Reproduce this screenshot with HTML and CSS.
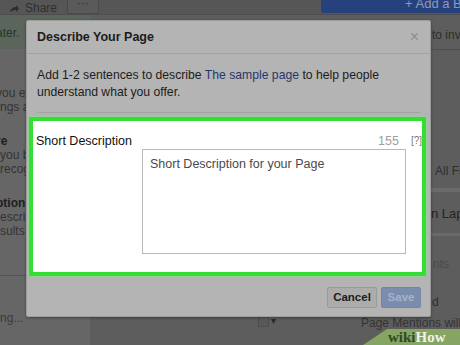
FILE: index.html
```html
<!DOCTYPE html>
<html>
<head>
<meta charset="utf-8">
<link rel="stylesheet" href="styles.css">
</head>
<body>
<div class="page">
  <div class="topbar">
    <div class="tb-left">
      <span class="share"><svg width="10" height="9" viewBox="0 0 10 9"><path d="M1 8 C2 4 5 3 7 3 V1 L10 4.5 L7 8 V6 C5 6 3 6.5 1 8 Z" fill="#2e2e2e"/></svg> Share</span>
      <span class="more">···</span>
    </div>
    <div class="addbtn">+ Add a Button</div>
  </div>
  <div class="cols">
    <div class="left">
      <div class="band">ater.</div>
      <p class="l1">you expect<br>ngs at</p>
      <p class="l2"><b>re</b><br>you b<br>recog</p>
      <p class="l3"><b>ption</b><br>escrip<br>sults</p>
      <div class="lline"></div>
      <p class="l4">ng...</p>
    </div>
    <div class="mid">
      <div class="tools"><span class="sq"></span><span class="caret">▾</span></div>
      <div class="mentions">Page Mentions will show</div>
    </div>
    <div class="right">
      <div class="r1">to invite</div>
      <div class="r2">All Friends</div>
      <div class="r3">n Laptop</div>
      <div class="r4">nts</div>
      <div class="r5">d</div>
    </div>
  </div>

  <div class="modal">
    <div class="m-head">
      <span class="m-title">Describe Your Page</span>
      <span class="m-close">×</span>
    </div>
    <div class="m-intro">Add 1-2 sentences to describe <span class="link">The sample page</span> to help people understand what you offer.</div>
    <div class="hl">
      <div class="lbl">Short Description</div>
      <div class="field">
        <div class="counter"><span class="num">155</span><span class="help">[?]</span></div>
        <div class="ta">Short Description for your Page</div>
      </div>
    </div>
    <div class="m-foot">
      <span class="btn cancel">Cancel</span>
      <span class="btn save">Save</span>
    </div>
  </div>

  <div class="wm"><span class="wiki">wiki</span><span class="how">How</span></div>
</div>
</body>
</html>
```
FILE: styles.css
```css
html, body { margin: 0; padding: 0; }
body {
  width: 460px; height: 345px; overflow: hidden;
  background: #5d5d5d;
  font-family: "Liberation Sans", Arial, sans-serif;
  position: relative;
}
.page { width: 460px; height: 345px; position: relative; overflow: hidden; }
.topbar {
  height: 14px; display: flex; justify-content: space-between;
  background: #565656; border-bottom: 1px solid #4e4e4e;
}
.tb-left { display: flex; align-items: flex-end; }
.share {
  margin-left: 9px; font-size: 12px; color: #2f2f2f; line-height: 12px;
  display: flex; align-items: center; gap: 6px; margin-top: -4px;
}
.more {
  margin-left: 10px; width: 32px; height: 14px; border: 1px solid #4a4a4a; border-top: 0;
  box-sizing: border-box; text-align: center; color: #333; font-size: 12px; line-height: 6px;
  background: #5a5a5a;
}
.addbtn {
  width: 139px; height: 13px; background: #27417d; border-radius: 0 0 0 3px;
  color: #8c9ab8; font-size: 13px; line-height: 8px; padding-left: 84px; box-sizing: border-box;
  white-space: nowrap; overflow: hidden;
}
.cols { display: flex; height: 330px; }
.left { width: 90px; font-size: 12px; color: #2e2e2e; background: #666; flex: none; }
.left p { margin: 0; line-height: 14px; }
.band { height: 34px; background: #5b655b; color: #263826; line-height: 36px; text-indent: -4px; }
.l1, .l2, .l3 { text-indent: -4px; color: #333; }
.l1 { padding-top: 37px; }
.l2 { padding-top: 20px; }
.l2 b, .l3 b { color: #1e1e1e; }
.l3 { padding-top: 20px; }
.lline { margin-top: 37px; height: 1px; background: #555; }
.l4 { padding-top: 35px; color: #3a3a3a; }
.mid { flex: 1; min-width: 0; display: flex; flex-direction: column; justify-content: flex-end; padding-bottom: 16px; }
.tools { display: flex; align-items: center; gap: 2px; margin-left: 168px; margin-bottom: -1px; height: 10px; }
.sq { width: 9px; height: 9px; background: #595959; border: 1px solid #4d4d4d; }
.caret { font-size: 10px; color: #2a2a2a; line-height: 10px; }
.mentions { margin-left: 271px; margin-right: -200px; font-size: 12px; color: #333; white-space: nowrap; line-height: 12px; margin-top: -8px; }
.right { width: 40px; font-size: 12px; color: #2e2e2e; white-space: nowrap; overflow: hidden; flex: none; }
.r1 { margin-top: 13px; padding-bottom: 7px; border-bottom: 1px solid #4e4e4e; padding-left: 12px; }
.r2 { margin-top: 114px; padding-left: 15px; padding-bottom: 10px; border-bottom: 4px solid #6b6b6b; }
.r3 { margin-top: 14px; font-size: 13px; color: #232323; padding-left: 11px; padding-bottom: 12px; border-bottom: 3px solid #696969; }
.r4 { margin-top: 21px; color: #4a4a4a; padding-left: 13px; }
.r5 { margin-top: 24px; padding-left: 12px; }

.modal {
  position: absolute; left: 26px; top: 20px; width: 405px; height: 297px;
  background: #b4b4b4; box-sizing: border-box;
  border: 1px solid #9c9c9c; border-radius: 2px;
  box-shadow: 0 1px 3px rgba(0,0,0,0.35);
  display: flex; flex-direction: column;
}
.m-head {
  height: 32px; border-bottom: 1px solid #a3a3a3; display: flex;
  justify-content: space-between; align-items: center; padding: 0 10px 0 10px;
}
.m-title { font-weight: bold; font-size: 12.5px; color: #1c1c1c; }
.m-close { font-size: 16px; color: #8f8f8f; margin-right: 1px; }
.m-intro {
  margin: 13px 10px 0 10px; padding-bottom: 11px; border-bottom: 1px solid #a3a3a3;
  font-size: 12.2px; line-height: 17px; color: #1c1c1c;
}
.link { color: #26366e; }
.hl {
  margin: 4px 4px 0 2px; border: 4px solid #34de34; background: #fff;
  display: grid; grid-template-columns: 106px 280px; padding: 12px 0 18px 3px;
  box-shadow: 0 0 2px #6f6;
}
.lbl { font-size: 12.5px; line-height: 16px; color: #111; }
.counter { display: flex; justify-content: flex-end; gap: 12px; line-height: 16px; height: 16px; }
.num { font-size: 12.5px; color: #a0a0a0; }
.help { font-size: 10px; color: #777; }
.ta {
  width: 264px; height: 105px; box-sizing: border-box; border: 1px solid #b9b9b9;
  padding: 6px 7px; font-size: 12.5px; line-height: 16px; color: #4a4a4a;
}
.m-foot { display: flex; justify-content: flex-end; gap: 4px; padding: 11px 9px 0 0; }
.btn {
  height: 21px; box-sizing: border-box; font-size: 11.5px; font-weight: bold;
  line-height: 19px; text-align: center; border-radius: 2px;
}
.cancel { width: 50px; background: #acacac; border: 1px solid #9a9a9a; color: #1d1d1d; }
.save { width: 40px; background: #7b8dad; border: 1px solid #7485a6; color: #a6b2c9; }

.wm {
  position: absolute; right: 0; bottom: 0; width: 97px; height: 16px;
  background: #86a564; clip-path: polygon(24px 0, 100% 0, 100% 100%, 0 100%);
  font-family: "Liberation Serif", "DejaVu Serif", serif; font-weight: bold;
  font-size: 15px; line-height: 17px; padding-left: 25px; box-sizing: border-box;
  white-space: nowrap;
}
.wiki { color: #2e4a22; }
.how { color: #eef3e6; }
```
